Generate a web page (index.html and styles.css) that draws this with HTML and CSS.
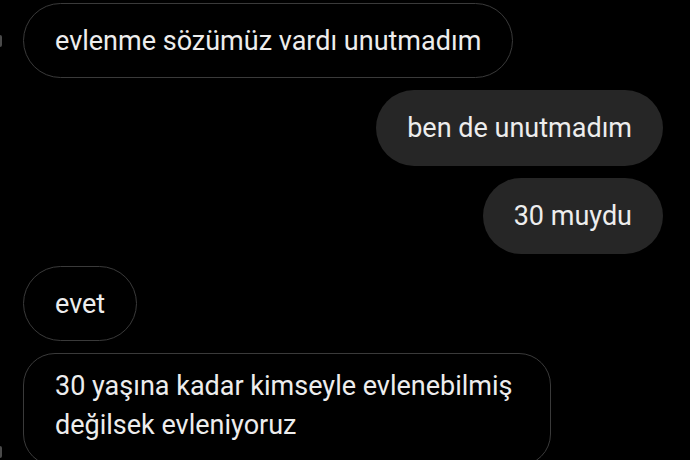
FILE: index.html
```html
<!DOCTYPE html>
<html lang="tr">
<head>
<meta charset="utf-8">
<title>Sohbet</title>
<link rel="stylesheet" href="styles.css">
</head>
<body>
<main class="chat">
  <div class="row in">
    <span class="mark"></span>
    <div class="bubble out-line">evlenme sözümüz vardı unutmadım</div>
  </div>
  <div class="row me">
    <div class="bubble filled">ben de unutmadım</div>
  </div>
  <div class="row me">
    <div class="bubble filled">30 muydu</div>
  </div>
  <div class="row in">
    <span class="mark blank"></span>
    <div class="bubble out-line">evet</div>
  </div>
  <div class="row in">
    <span class="mark low"></span>
    <div class="bubble out-line multi">30 yaşına kadar kimseyle evlenebilmiş<br>değilsek evleniyoruz</div>
  </div>
</main>
</body>
</html>
```
FILE: styles.css
```css
html, body {
  margin: 0;
  padding: 0;
  background: #000;
  height: 100%;
  overflow: hidden;
}
.chat {
  display: flex;
  flex-direction: column;
  gap: 12px;
  padding-top: 3px;
  font-family: Roboto, "Noto Sans", sans-serif;
  color: #ededed;
  font-size: 27px;
}
.row {
  display: flex;
  align-items: center;
}
.row.me {
  justify-content: flex-end;
  padding-right: 27px;
}
.mark {
  width: 2px;
  height: 12px;
  background: #4a4a4a;
  margin-right: 21px;
  border-radius: 0 2px 2px 0;
}
.mark.blank { background: transparent; }
.mark.low { align-self: flex-end; margin-bottom: 8px; }
.bubble {
  line-height: 36px;
  padding: 20px 31px;
  border-radius: 38px;
  box-sizing: border-box;
}
.out-line {
  border: 1.5px solid #3a3a3a;
  padding: 18.5px 31px;
}
.filled {
  background: #262626;
}
.multi {
  border-radius: 32px;
  padding: 13px 37px 20px 31px;
  line-height: 39px;
}
```
